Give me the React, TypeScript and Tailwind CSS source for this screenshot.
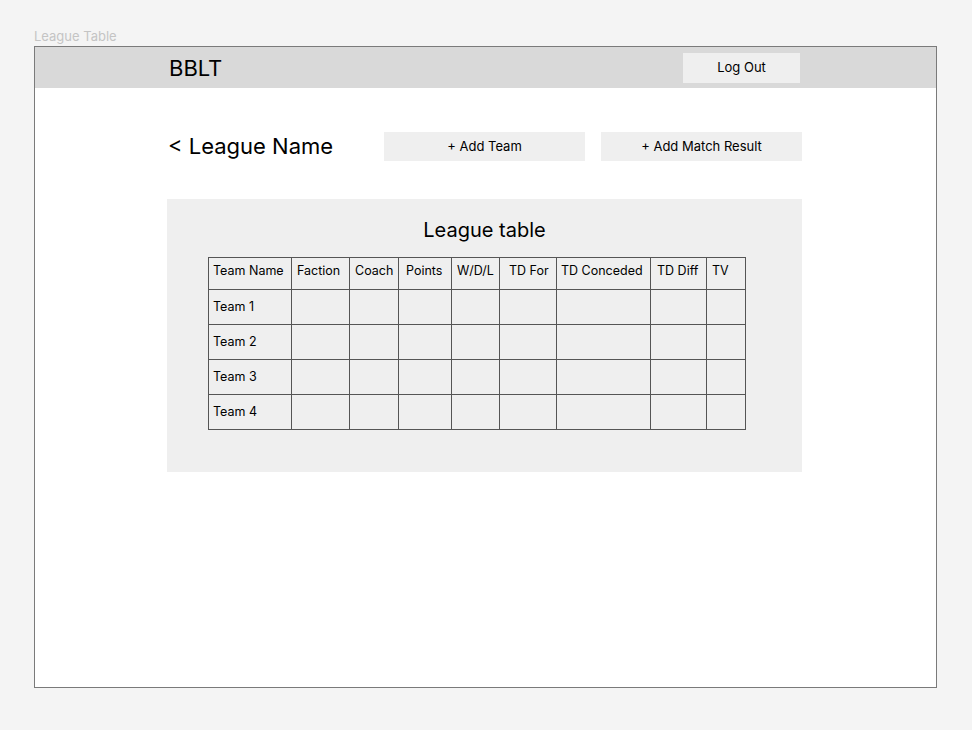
export default function App() {
  const columns = [
    { label: "Team Name", w: "w-[83px] pl-[4px]" },
    { label: "Faction", w: "w-[58px] pl-[5px]" },
    { label: "Coach", w: "w-[49px] pl-[5px]" },
    { label: "Points", w: "w-[53px] pl-[7px]" },
    { label: "W/D/L", w: "w-[48px] pl-[5px]" },
    { label: "TD For", w: "w-[57px] pl-[9px]" },
    { label: "TD Conceded", w: "w-[94px] pl-[4px]" },
    { label: "TD Diff", w: "w-[56px] pl-[6px]" },
    { label: "TV", w: "w-[39px] pl-[5px]" },
  ]
  const teams = ["Team 1", "Team 2", "Team 3", "Team 4"]

  return (
    <div className="min-h-[730px] w-[972px] bg-[#f4f4f4] pl-[34px] pt-[28px] font-['Inter',sans-serif] text-black">
      <div className="h-[18px] text-[13px] leading-[16px] text-[#c4c4c4]">League Table</div>
      <div className="h-[642px] w-[903px] border border-[#7a7a7a] bg-white">
        <header className="flex h-[41px] items-center justify-between bg-[#d9d9d9] pl-[134px] pr-[136px]">
          <span className="text-[22px] leading-none">BBLT</span>
          <button className="h-[30px] w-[117px] bg-[#efefef] text-[13px]">Log Out</button>
        </header>

        <div className="ml-[132px] w-[635px]">
          <div className="mt-[44px] flex items-center">
            <h1 className="ml-[1px] mt-[-2px] w-[216px] text-[22px] leading-none">&lt; League Name</h1>
            <button className="h-[29px] w-[201px] bg-[#efefef] pt-[1px] text-[13px]">+ Add Team</button>
            <button className="ml-[16px] h-[29px] w-[201px] bg-[#efefef] pt-[1px] text-[13px]">+ Add Match Result</button>
          </div>

          <section className="mt-[38px] h-[273px] bg-[#efefef] pt-[18px]">
            <h2 className="text-center text-[20px] leading-[26px]">League table</h2>
            <table className="ml-[41px] mt-[14px] border-collapse text-[12.5px]">
              <thead>
                <tr className="h-[32px]">
                  {columns.map((c) => (
                    <th key={c.label} className={`${c.w} border border-[#555] pr-[2px] pb-[4px] text-left font-normal whitespace-nowrap`}>
                      {c.label}
                    </th>
                  ))}
                </tr>
              </thead>
              <tbody>
                {teams.map((t) => (
                  <tr key={t} className="h-[35px]">
                    {columns.map((c, i) => (
                      <td key={c.label} className="border border-[#555] px-[4px]">
                        {i === 0 ? t : ""}
                      </td>
                    ))}
                  </tr>
                ))}
              </tbody>
            </table>
          </section>
        </div>
      </div>
    </div>
  )
}
